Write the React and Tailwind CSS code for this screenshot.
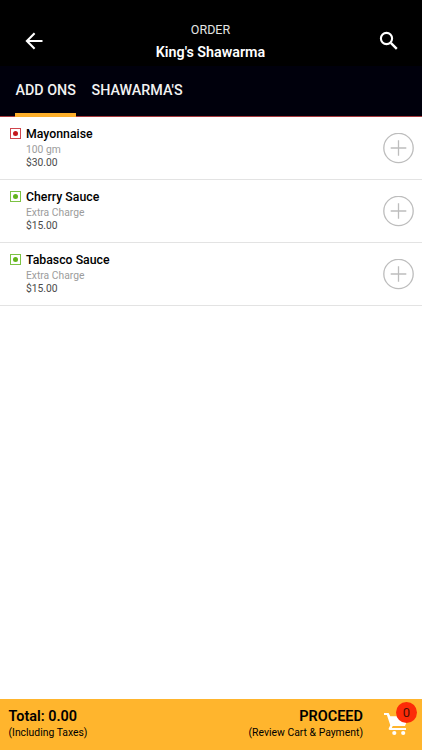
const tabs = [
  { label: "ADD ONS", active: true, width: "w-[61px]" },
  { label: "SHAWARMA'S", active: false, width: "w-[93px]" },
];

const items = [
  { name: "Mayonnaise", note: "100 gm", price: "$30.00", veg: false },
  { name: "Cherry Sauce", note: "Extra Charge", price: "$15.00", veg: true },
  { name: "Tabasco Sauce", note: "Extra Charge", price: "$15.00", veg: true },
];

// Square food marker, green for veg and red for non-veg
function FoodMark({ veg }) {
  return (
    <span
      className={`mt-[11px] flex h-[11px] w-[11px] shrink-0 items-center justify-center border ${
        veg ? "border-[#7cc243]" : "border-[#d0454c]"
      }`}
    >
      <span className={`h-[5px] w-[5px] rounded-full ${veg ? "bg-[#62b41c]" : "bg-[#c4161c]"}`} />
    </span>
  );
}

function BackIcon() {
  return (
    <svg width="24" height="24" viewBox="0 0 24 24" fill="none" stroke="currentColor" strokeWidth="2.1">
      <path d="M20.500 12H5.500M12.600 4.300L4.900 12l7.700 7.700" />
    </svg>
  );
}

function SearchIcon() {
  return (
    <svg width="24" height="24" viewBox="0 0 24 24" fill="none" stroke="currentColor">
      <circle cx="9.500" cy="9.500" r="5.600" strokeWidth="2.100" />
      <path d="M13.800 13.800l6 6" strokeWidth="2.400" />
    </svg>
  );
}

function CartIcon() {
  return (
    <svg width="26" height="24" viewBox="0 0 26 24" fill="currentColor">
      <path d="M0 0h4.600l1.700 3.300H25L21 13H8.700l-.9 2H22v1.900H5.900c-1 0-1.500-.9-1.100-1.700l1.500-3L2.900 1.900H0z" />
      <circle cx="10.300" cy="20" r="2.100" />
      <circle cx="19.200" cy="20" r="2.100" />
    </svg>
  );
}

function ItemRow({ item }) {
  return (
    <li className="flex h-[63px] border-b border-[#e3e3e3] pl-[10px] pr-[8px]">
      <FoodMark veg={item.veg} />
      <div className="ml-[5px] flex-1 pt-[9px]">
        <p className="text-[12.3px] leading-[16px] font-medium text-black">{item.name}</p>
        <p className="text-[10.3px] leading-[15px] text-[#9c9c9c]">{item.note}</p>
        <p className="text-[10.3px] leading-[12px] text-[#4a4a4a]">{item.price}</p>
      </div>
      <button aria-label={`Add ${item.name}`} className="self-center">
        <svg width="31" height="31" viewBox="0 0 31 31" fill="none" stroke="#bdbdbd" strokeWidth="1.3">
          <circle cx="15.5" cy="15" r="14.7" />
          <path d="M7.7 15h15.6M15.5 7.2v15.6" />
        </svg>
      </button>
    </li>
  );
}

export default function App() {
  return (
    <div className="flex h-[750px] w-[422px] flex-col overflow-hidden bg-white font-[Roboto,sans-serif]">
      {/* Header */}
      <header className="flex h-[66px] shrink-0 items-start justify-between bg-black pl-[22px] pr-[21px] text-white">
        <button aria-label="Back" className="mt-[29px]">
          <BackIcon />
        </button>
        <div className="pt-[21px] pr-[2px] text-center">
          <p className="text-[12.5px] leading-[18px] text-[#e4e4e4]">ORDER</p>
          <h1 className="mt-[3px] text-[14.3px] leading-[20px] font-semibold">King's Shawarma</h1>
        </div>
        <button aria-label="Search" className="mt-[29px]">
          <SearchIcon />
        </button>
      </header>

      {/* Tabs */}
      <nav className="flex h-[51px] shrink-0 gap-[15px] border-b border-[#a83a3e] bg-[#00000c] pl-[15px] text-[#f2f2f2]">
        {tabs.map((tab) => (
          <button
            key={tab.label}
            className={`-mb-px flex h-[51px] flex-col justify-between whitespace-nowrap text-left text-[14.3px] leading-[18px] font-medium ${tab.width}`}
          >
            <span className="pt-[15px] pl-[0.5px]">{tab.label}</span>
            {tab.active && <span className="h-[4px] w-full bg-[#fdaf2b]" />}
          </button>
        ))}
      </nav>

      {/* Menu items */}
      <ul className="flex-1">
        {items.map((item) => (
          <ItemRow key={item.name} item={item} />
        ))}
      </ul>

      {/* Cart summary */}
      <footer className="flex h-[51px] shrink-0 items-start bg-[#ffb52d] pl-[8.5px] pr-[12px] text-black">
        <div className="flex-1 pt-[9px]">
          <p className="text-[14.4px] leading-[18px] font-semibold">Total: 0.00</p>
          <p className="text-[10.4px] leading-[14px]">(Including Taxes)</p>
        </div>
        <div className="pt-[9px] text-right">
          <p className="text-[14.5px] leading-[18px] font-semibold">PROCEED</p>
          <p className="text-[10.4px] leading-[14px]">(Review Cart &amp; Payment)</p>
        </div>
        <div className="relative mt-[14px] ml-[21px] text-white">
          <CartIcon />
          <span className="absolute -top-[11px] left-[12px] flex h-[21px] w-[21px] items-center justify-center rounded-full bg-[#fc2b08] text-[13px] text-[#4a1003]">
            0
          </span>
        </div>
      </footer>
    </div>
  );
}
